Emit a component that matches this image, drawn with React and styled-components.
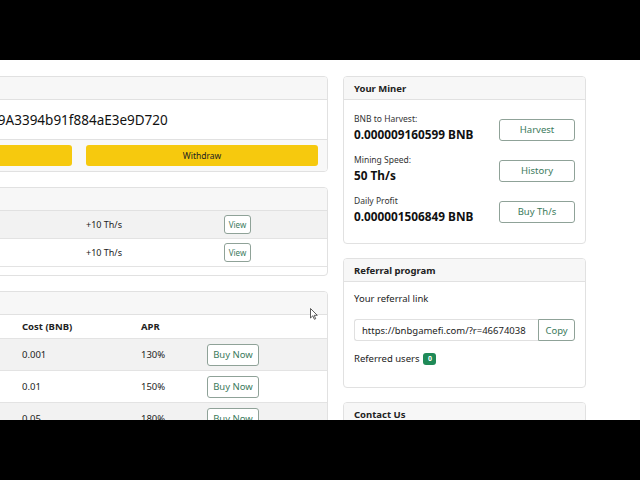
import React from "react";
import styled, { createGlobalStyle } from "styled-components";

const GlobalStyle = createGlobalStyle`
  html, body {
    margin: 0;
    padding: 0;
    background: #000;
    overflow: hidden;
  }
  body {
    font-family: "Noto Sans", "Open Sans", Arial, sans-serif;
    color: #212529;
  }
`;

const Screen = styled.div`
  width: 640px;
  height: 480px;
  display: flex;
  flex-direction: column;
`;

const Letterbox = styled.div`
  height: 60px;
  background: #000;
  flex: none;
`;

const Page = styled.div`
  position: relative;
  height: 360px;
  background: #fff;
  overflow: hidden;
`;

const Columns = styled.div`
  display: flex;
  gap: 15px;
  margin-left: -173px;
  padding-top: 16px;
`;

const Column = styled.div`
  width: ${p => p.$width}px;
  flex: none;
  display: flex;
  flex-direction: column;
  gap: ${p => p.$gap || 14}px;
`;

const Card = styled.div`
  border: 1px solid #e1e1e1;
  border-radius: 4px;
  background: #fff;
  overflow: hidden;
`;

const CardHeader = styled.div`
  background: #f7f7f7;
  border-bottom: 1px solid #e1e1e1;
  height: 22px;
  padding: 0 10px;
  display: flex;
  align-items: center;
  font-size: 9.5px;
  font-weight: 700;
  color: #222;
`;

const CardBody = styled.div`
  padding: ${p => p.$pad || "10px"};
`;

const CardFooter = styled.div`
  background: #f8f8f8;
  border-top: 1px solid #e1e1e1;
  padding: 5px 9px 5px 12px;
  display: flex;
  gap: 14px;
`;

const Address = styled.div`
  height: 39px;
  display: flex;
  align-items: center;
  padding-left: 23px;
  font-size: 13.5px;
  color: #111;
  white-space: nowrap;
`;

const YellowButton = styled.button`
  flex: 1;
  height: 21px;
  border: none;
  border-radius: 3px;
  background: #f6c90e;
  color: #222;
  font-family: inherit;
  font-size: 8.5px;
  padding: 0;
`;

const OutlineButton = styled.button`
  width: ${p => p.$w}px;
  height: ${p => p.$h}px;
  border: 1px solid #8fa298;
  border-radius: 3px;
  background: #fff;
  color: #3b7a5c;
  font-family: inherit;
  font-size: ${p => p.$size || 9.5}px;
  padding: 0;
  flex: none;
`;

const Grid = styled.div`
  display: grid;
  grid-template-columns: ${p => p.$cols};
  align-items: center;
  height: ${p => p.$h}px;
  background: ${p => (p.$striped ? "#f2f2f2" : "#fff")};
  border-bottom: 1px solid #e3e3e3;
  padding-left: 8px;
  font-size: ${p => p.$size || 9.5}px;
  font-weight: ${p => (p.$head ? 700 : 400)};
  color: #222;
  white-space: nowrap;
`;

const TableWrap = styled.div`
  padding-bottom: ${p => p.$pb || 0}px;
`;

const MinerRow = styled.div`
  display: flex;
  align-items: center;
  justify-content: space-between;
  height: 41px;
`;

const MinerStat = styled.div`
  margin-top: -3px;
`;

const Label = styled.div`
  font-size: 8.5px;
  color: #333;
  line-height: 12px;
`;

const Value = styled.div`
  font-size: 11.8px;
  font-weight: 700;
  color: #111;
  line-height: 18px;
`;

const Text = styled.div`
  font-size: 9.5px;
  color: #222;
  display: flex;
  align-items: center;
  gap: 4px;
`;

const InputGroup = styled.div`
  display: flex;
  height: 22px;
  margin: 14px 0 11px;
`;

const LinkInput = styled.div`
  flex: 1;
  border: 1px solid #e0e0e0;
  border-right: none;
  border-radius: 3px 0 0 3px;
  display: flex;
  align-items: center;
  padding-left: 7px;
  font-size: 9.5px;
  color: #222;
`;

const CopyButton = styled.button`
  width: 37px;
  border: 1px solid #8fa298;
  border-radius: 0 3px 3px 0;
  background: #fff;
  color: #3b7a5c;
  font-family: inherit;
  font-size: 9.5px;
  padding: 0;
`;

const Badge = styled.span`
  display: inline-flex;
  align-items: center;
  justify-content: center;
  width: 13px;
  height: 12px;
  border-radius: 3px;
  background: #1f8a57;
  color: #fff;
  font-size: 7px;
  font-weight: 700;
`;

const Cursor = styled.svg`
  position: absolute;
  left: 310px;
  top: 248px;
`;

const investments = [
  { date: "2023-05-12", amount: "+10 Th/s", striped: true },
  { date: "2023-05-11", amount: "+10 Th/s", striped: false }
];

const plans = [
  { power: "1 Th/s", cost: "0.001", apr: "130%" },
  { power: "10 Th/s", cost: "0.01", apr: "150%" },
  { power: "50 Th/s", cost: "0.05", apr: "180%" }
];

const miner = [
  { label: "BNB to Harvest:", value: "0.000009160599 BNB", action: "Harvest" },
  { label: "Mining Speed:", value: "50 Th/s", action: "History" },
  { label: "Daily Profit", value: "0.000001506849 BNB", action: "Buy Th/s" }
];

export default function App() {
  return (
    <Screen>
      <GlobalStyle />
      <Letterbox />
      <Page>
        <Columns>
          <Column $width={501} $gap={15}>
            <Card>
              <CardHeader>Your Wallet</CardHeader>
              <Address>0x5Fd1c7B22aE04b7C89A3394b91f884aE3e9D720</Address>
              <CardFooter>
                <YellowButton>Deposit</YellowButton>
                <YellowButton>Withdraw</YellowButton>
              </CardFooter>
            </Card>

            <Card>
              <CardHeader>History</CardHeader>
              <TableWrap $pb={8}>
                {investments.map((row, i) => (
                  <Grid
                    key={i}
                    $cols="250px 138px 1fr"
                    $h={27}
                    $striped={row.striped}
                    $size={9}
                  >
                    <span>{row.date}</span>
                    <span>{row.amount}</span>
                    <span>
                      <OutlineButton $w={27} $h={19} $size={8}>
                        View
                      </OutlineButton>
                    </span>
                  </Grid>
                ))}
              </TableWrap>
            </Card>

            <Card>
              <CardHeader>Buy Hashpower</CardHeader>
              <TableWrap>
                <Grid $cols="186px 119px 66px 1fr" $h={23} $head>
                  <span>Hashrate</span>
                  <span>Cost (BNB)</span>
                  <span>APR</span>
                  <span />
                </Grid>
                {plans.map((p, i) => (
                  <Grid
                    key={i}
                    $cols="186px 119px 66px 1fr"
                    $h={31}
                    $striped={i % 2 === 0}
                  >
                    <span>{p.power}</span>
                    <span>{p.cost}</span>
                    <span>{p.apr}</span>
                    <span>
                      <OutlineButton $w={52} $h={22}>
                        Buy Now
                      </OutlineButton>
                    </span>
                  </Grid>
                ))}
              </TableWrap>
            </Card>
          </Column>

          <Column $width={243} $gap={14}>
            <Card>
              <CardHeader>Your Miner</CardHeader>
              <CardBody $pad="9px 10px 11px">
                {miner.map(m => (
                  <MinerRow key={m.action}>
                    <MinerStat>
                      <Label>{m.label}</Label>
                      <Value>{m.value}</Value>
                    </MinerStat>
                    <OutlineButton $w={76} $h={22}>
                      {m.action}
                    </OutlineButton>
                  </MinerRow>
                ))}
              </CardBody>
            </Card>

            <Card>
              <CardHeader>Referral program</CardHeader>
              <CardBody $pad="10px 10px 22px">
                <Text>Your referral link</Text>
                <InputGroup>
                  <LinkInput>https://bnbgamefi.com/?r=46674038</LinkInput>
                  <CopyButton>Copy</CopyButton>
                </InputGroup>
                <Text>
                  Referred users <Badge>0</Badge>
                </Text>
              </CardBody>
            </Card>

            <Card>
              <CardHeader>Contact Us</CardHeader>
              <CardBody>
                <Text>Telegram</Text>
              </CardBody>
            </Card>
          </Column>
        </Columns>
        <Cursor width="8" height="12" viewBox="0 0 8 12">
          <path
            d="M0.5 0.5 L0.5 10 L2.8 7.8 L4.4 11.3 L5.7 10.7 L4.2 7.3 L7.3 7.3 Z"
            fill="#fff"
            stroke="#333"
            strokeWidth="0.8"
          />
        </Cursor>
      </Page>
      <Letterbox />
    </Screen>
  );
}
